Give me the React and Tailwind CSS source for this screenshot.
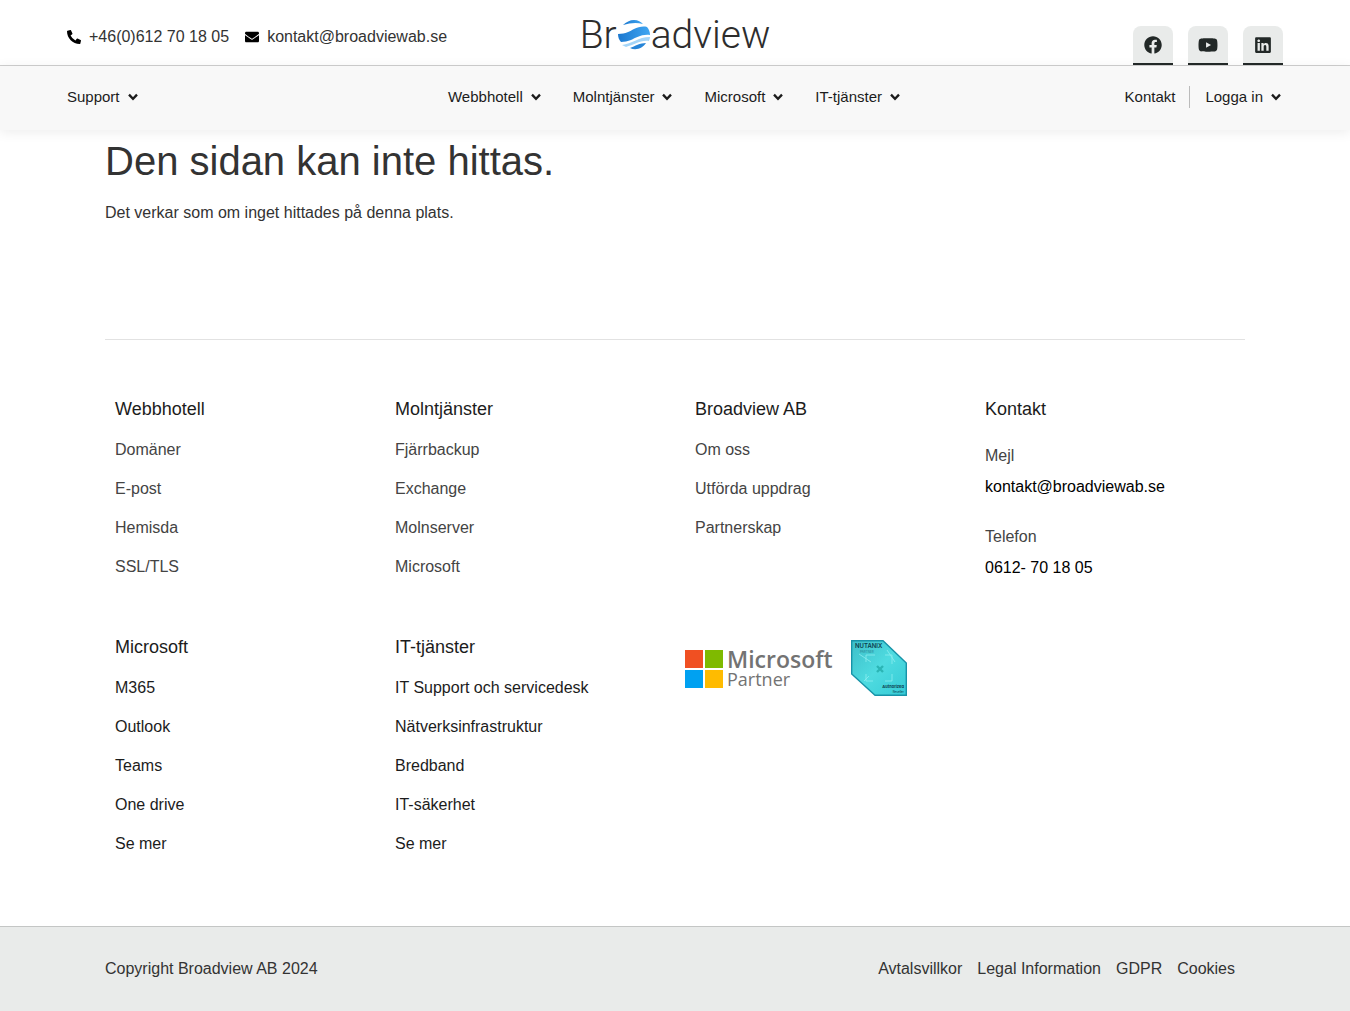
import React from 'react';
import { FaPhoneAlt, FaEnvelope, FaFacebook, FaYoutube, FaLinkedin } from 'react-icons/fa';

const menuItems = ['Webbhotell', 'Molntjänster', 'Microsoft', 'IT-tjänster'];

const socials = [
  { label: 'Facebook', Icon: FaFacebook, size: 'size-[18px]' },
  { label: 'Youtube', Icon: FaYoutube, size: 'size-5' },
  { label: 'Linkedin', Icon: FaLinkedin, size: 'size-[18px]' },
];

const legalLinks = ['Avtalsvillkor', 'Legal Information', 'GDPR', 'Cookies'];

const Chevron = () => (
  <svg viewBox="0 0 10 8" className="h-2 w-[10px]" fill="none" aria-hidden="true">
    <path d="M1 1.6 5 5.8 9 1.6" stroke="currentColor" strokeWidth="2.3" />
  </svg>
);

const MenuButton = ({ children }) => (
  <button type="button" aria-haspopup="true" className="flex items-center gap-2 whitespace-nowrap">
    {children}
    <Chevron />
  </button>
);

const Globe = () => (
  <svg viewBox="0 0 32 30" className="h-[30px] w-8" aria-hidden="true">
    <defs>
      <linearGradient id="globe" x1="0" y1="0" x2="1" y2="0">
        <stop offset="0" stopColor="#1b78cf" />
        <stop offset="1" stopColor="#3fa6f2" />
      </linearGradient>
    </defs>
    <path d="M5 5C8 2 12 0 16 0c4 0 7 2 9 4-7-2-13-1-20 1Z" fill="url(#globe)" />
    <path
      d="M0 14c8 0 12-3 16-5 4-2 9-3 13-2 2 2 3 5 3 8-9-1-14 3-19 5-3 1-7 2-10 2-2-2-3-5-3-8Z"
      fill="url(#globe)"
    />
    <path d="M4 25c10-1 16-8 28-8 0 2-1 3-1 4-9-1-15 4-23 6Z" fill="#a4d5f8" />
    <path d="M12 28c5-2 10-5 16-5-3 5-10 8-16 5Z" fill="#2685d8" />
  </svg>
);

const Logo = () => (
  <a
    href="#"
    aria-label="Broadview"
    className="flex items-center gap-px font-['Roboto',sans-serif] text-[39px] leading-10 font-light text-[#2d2d2d]"
  >
    <span>Br</span>
    <Globe />
    <span>adview</span>
  </a>
);

const LinkColumn = ({ title, links, dark }) => (
  <div className="px-[10px]">
    <h2 className="mb-[18px] text-lg leading-[22px] text-[#1c1c1c]">{title}</h2>
    <ul className={`space-y-[15px] ${dark ? 'text-[#1c1c1c]' : 'text-[#444]'}`}>
      {links.map((link) => (
        <li key={link}>
          <a href="#" className="block">{link}</a>
        </li>
      ))}
    </ul>
  </div>
);

const MicrosoftPartner = () => (
  <div className="flex items-center gap-1 font-['Open_Sans',sans-serif] text-[#737373]">
    <svg viewBox="0 0 38 38" className="size-[38px]" aria-hidden="true">
      <path fill="#f05022" d="M0 0h18v18H0z" />
      <path fill="#7fba00" d="M20 0h18v18H20z" />
      <path fill="#00a1f1" d="M0 20h18v18H0z" />
      <path fill="#ffbb00" d="M20 20h18v18H20z" />
    </svg>
    <div>
      <div className="text-[23px] leading-5 font-semibold">Microsoft</div>
      <div className="text-lg leading-5">Partner</div>
    </div>
  </div>
);

const NutanixBadge = () => (
  <svg viewBox="0 0 56 56" className="size-14" role="img" aria-label="Nutanix">
    <defs>
      <linearGradient id="badge" x1="0" y1="0" x2="1" y2="1">
        <stop offset="0" stopColor="#3dbfc9" />
        <stop offset="0.5" stopColor="#4fdbe0" />
        <stop offset="1" stopColor="#35cbd6" />
      </linearGradient>
    </defs>
    <path d="M.7.7H32L55.3 23v32.3H24L.7 34Z" fill="url(#badge)" stroke="#1793a8" strokeWidth="1.4" />
    <path
      d="M15 22v-7h9M34 15h7v9M41 34v7h-7M22 41h-7v-7M8 14l12 8M36 10l8 12M18 36l-5 5"
      fill="none"
      stroke="#8beef0"
      strokeWidth="0.8"
    />
    <path d="m26 26 6 6m0-6-6 6" stroke="#2bb5b5" strokeWidth="2.4" />
    <g fontFamily="Inter, sans-serif" fill="#0c3d4c">
      <text x="4" y="8" fontSize="6" fontWeight="600">NUTANIX</text>
      <text x="9" y="13" fontSize="3" fill="#29808d">PARTNER</text>
      <text x="53" y="48" fontSize="4" fontWeight="700" textAnchor="end">Authorized</text>
      <text x="53" y="53" fontSize="3" textAnchor="end">Reseller</text>
    </g>
  </svg>
);

const App = () => {
  return (
    <div className="bg-white font-['Liberation_Sans',Arial,sans-serif] text-base text-[#333]">
      <header>
        {/* Top bar */}
        <div className="grid h-[66px] grid-cols-[1fr_auto_1fr] border-b border-[#cfcfcf] px-[67px]">
          <div className="flex items-center gap-4 pt-2">
            <a href="tel:+46612701805" className="flex items-center gap-2">
              <FaPhoneAlt className="size-[14px] text-black" />
              +46(0)612 70 18 05
            </a>
            <a href="mailto:kontakt@broadviewab.se" className="flex items-center gap-2">
              <FaEnvelope className="size-[14px] text-black" />
              kontakt@broadviewab.se
            </a>
          </div>
          <div className="flex items-center pt-1">
            <Logo />
          </div>
          <div className="flex items-end justify-end gap-[15px]">
            {socials.map(({ label, Icon, size }) => (
              <a
                key={label}
                href="#"
                aria-label={label}
                className="flex h-[39px] w-10 items-center justify-center rounded-t-lg border-b-2 border-[#222827] bg-[#e9ebea] text-[#222827]"
              >
                <Icon className={size} />
              </a>
            ))}
          </div>
        </div>

        {/* Main menu */}
        <nav className="grid grid-cols-[1fr_auto_1fr] items-center bg-[#f8f8f8] pt-5 pr-[69px] pb-[22px] pl-[67px] text-[15px] leading-[22px] text-[#1c1c1c] shadow-[0_2px_12px_rgba(0,0,0,0.08)]">
          <MenuButton>Support</MenuButton>
          <div className="flex gap-8">
            {menuItems.map((item) => (
              <MenuButton key={item}>{item}</MenuButton>
            ))}
          </div>
          <div className="flex items-center justify-end">
            <a href="#" className="mr-[14px]">Kontakt</a>
            <div className="border-l border-[#bbb] pl-[15px]">
              <MenuButton>Logga in</MenuButton>
            </div>
          </div>
        </nav>
      </header>

      <main className="mx-auto max-w-[1140px]">
        <h1 className="mt-[7px] text-[40px] leading-12">Den sidan kan inte hittas.</h1>
        <p className="mt-4">Det verkar som om inget hittades på denna plats.</p>
      </main>

      <footer>
        <div className="mx-auto mt-[114px] max-w-[1140px] border-t border-[#e2e2e2] pt-[58px] pb-[70px]">
          <div className="grid grid-cols-[280fr_300fr_290fr_270fr] gap-y-14">
            <LinkColumn title="Webbhotell" links={['Domäner', 'E-post', 'Hemisda', 'SSL/TLS']} />
            <LinkColumn title="Molntjänster" links={['Fjärrbackup', 'Exchange', 'Molnserver', 'Microsoft']} />
            <LinkColumn title="Broadview AB" links={['Om oss', 'Utförda uppdrag', 'Partnerskap']} />
            <div className="px-[10px]">
              <h2 className="text-lg leading-[22px] text-[#1c1c1c]">Kontakt</h2>
              <p className="mt-6 text-[#444]">Mejl</p>
              <a href="mailto:kontakt@broadviewab.se" className="mt-[7px] block text-black">kontakt@broadviewab.se</a>
              <p className="mt-[26px] text-[#444]">Telefon</p>
              <a href="tel:0612701805" className="mt-[7px] block text-black">0612- 70 18 05</a>
            </div>

            <LinkColumn title="Microsoft" links={['M365', 'Outlook', 'Teams', 'One drive', 'Se mer']} dark />
            <LinkColumn
              title="IT-tjänster"
              links={['IT Support och servicedesk', 'Nätverksinfrastruktur', 'Bredband', 'IT-säkerhet', 'Se mer']}
              dark
            />
            <div className="flex items-start gap-[18px] pt-1">
              <div className="pt-[9px]">
                <MicrosoftPartner />
              </div>
              <NutanixBadge />
            </div>
          </div>
        </div>

        {/* Copyright bar */}
        <div className="border-t border-[#c4c6c5] bg-[#e9ebea]">
          <div className="mx-auto flex max-w-[1140px] items-center justify-between py-[30px]">
            <p>Copyright Broadview AB 2024</p>
            <div className="flex gap-[15px] pr-[10px]">
              {legalLinks.map((link) => (
                <a key={link} href="#">{link}</a>
              ))}
            </div>
          </div>
        </div>
      </footer>
    </div>
  );
};

export default App;
